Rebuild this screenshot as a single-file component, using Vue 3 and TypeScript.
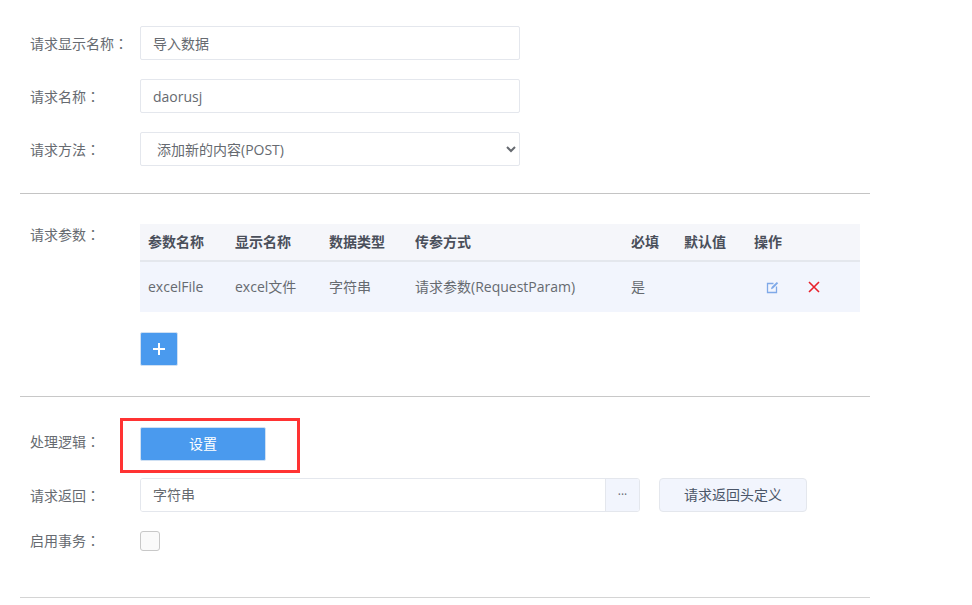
<script setup lang="ts">
const columns = ['参数名称', '显示名称', '数据类型', '传参方式', '必填', '默认值', '操作']
const widths = [87, 94, 86, 216, 53, 70, 114]
const cells = ['excelFile', 'excel文件', '字符串', '请求参数(RequestParam)', '是', '']
</script>

<template>
  <div class="page">
    <section class="section first">
      <div class="row">
        <label class="label">请求显示名称<span class="colon">：</span></label>
        <input class="field" value="导入数据" />
      </div>
      <div class="row">
        <label class="label">请求名称<span class="colon">：</span></label>
        <input class="field" value="daorusj" />
      </div>
      <div class="row">
        <label class="label">请求方法<span class="colon">：</span></label>
        <select class="field select">
          <option>添加新的内容(POST)</option>
        </select>
      </div>
    </section>

    <section class="section params">
      <div class="row top">
        <label class="label param-label">请求参数<span class="colon">：</span></label>
        <div class="param-body">
          <table class="table">
            <colgroup>
              <col v-for="w in widths" :key="w" :style="{ width: w + 'px' }" />
            </colgroup>
            <thead>
              <tr>
                <th v-for="c in columns" :key="c">{{ c }}</th>
              </tr>
            </thead>
            <tbody>
              <tr>
                <td v-for="(c, i) in cells" :key="i">{{ c }}</td>
                <td>
                  <div class="actions">
                    <svg class="icon" width="13" height="13" viewBox="0 0 13 13" fill="none">
                      <path d="M7.5 2.5H1.5V11.5H10.5V5.5" stroke="#7fa9e8" stroke-width="1.3" />
                      <path d="M5 8.2L5.6 6L10.8 0.9L12.2 2.3L7 7.5Z" fill="#7fa9e8" />
                    </svg>
                    <svg class="icon" width="12" height="12" viewBox="0 0 12 12" fill="none">
                      <path d="M1 1L11 11M11 1L1 11" stroke="#e8212b" stroke-width="1.6" />
                    </svg>
                  </div>
                </td>
              </tr>
            </tbody>
          </table>
          <button class="add" type="button">
            <svg width="14" height="14" viewBox="0 0 14 14" fill="none">
              <path d="M7 1V13M1 7H13" stroke="#fff" stroke-width="2" />
            </svg>
          </button>
        </div>
      </div>
    </section>

    <section class="section logic">
      <div class="row logic-row">
        <label class="label logic-label">处理逻辑<span class="colon">：</span></label>
        <div class="highlight-wrap">
          <button class="primary" type="button">设置</button>
          <span class="highlight"></span>
        </div>
      </div>
      <div class="row return-row">
        <label class="label">请求返回<span class="colon">：</span></label>
        <div class="group">
          <input class="group-input" value="字符串" />
          <button class="addon" type="button">···</button>
        </div>
        <button class="secondary" type="button">请求返回头定义</button>
      </div>
      <div class="row tx-row">
        <label class="label tx-label">启用事务<span class="colon">：</span></label>
        <span class="checkbox"></span>
      </div>
    </section>
  </div>
</template>

<style>
html,
body {
  margin: 0;
  background: #fff;
}
</style>

<style scoped>
.page {
  width: 850px;
  margin-left: 20px;
  font-family: "Open Sans", "Noto Sans CJK SC", sans-serif;
  font-size: 14px;
  line-height: 20px;
  color: #666a70;
}
.section {
  border-bottom: 1px solid #c8c8c8;
  box-sizing: border-box;
}
.first {
  padding-top: 26px;
  height: 194px;
  border-bottom-color: #c4c4c4;
}
.params {
  padding: 30px 0;
  height: 203px;
}
.logic {
  padding-top: 30px;
  height: 201px;
  border-bottom-color: #d4d4d4;
}
.row {
  display: flex;
  align-items: center;
  margin-bottom: 19px;
}
.row.top {
  align-items: flex-start;
  margin-bottom: 0;
}
.label {
  width: 120px;
  padding-left: 10px;
  box-sizing: border-box;
  flex: none;
  white-space: nowrap;
}
.colon {
  font-family: "Noto Sans CJK TC", sans-serif;
}
.field {
  width: 380px;
  height: 34px;
  box-sizing: border-box;
  border: 1px solid #e4e7ed;
  border-radius: 2px;
  background: #fff;
  padding: 0 12px;
  font: inherit;
  color: #666a70;
  outline: none;
}
.param-body {
  width: 720px;
}
.table {
  width: 720px;
  border-collapse: collapse;
  table-layout: fixed;
}
th {
  height: 36px;
  padding: 0 0 0 8px;
  background: #f5f6fa;
  border-bottom: 2px solid #e4e7ed;
  text-align: left;
  font-weight: 700;
  color: #4a4f5a;
}
td {
  height: 50px;
  padding: 0 0 0 8px;
  background: #f2f5fd;
}
.actions {
  display: flex;
  align-items: center;
  gap: 29px;
  padding-left: 12px;
}
.icon {
  display: block;
}
.add {
  display: flex;
  align-items: center;
  justify-content: center;
  width: 38px;
  height: 34px;
  margin-top: 20px;
  padding: 0;
  background: #4a9aee;
  border: 1px solid #cfe0f3;
  border-radius: 2px;
}
.logic-row {
  margin-bottom: 17px;
}
.logic-label {
  margin-top: -6px;
}
.highlight-wrap {
  position: relative;
  display: flex;
}
.primary {
  width: 126px;
  height: 34px;
  padding: 0;
  background: #4a9aee;
  border: 1px solid #cfe0f3;
  border-radius: 2px;
  color: #fff;
  font: inherit;
}
.highlight {
  position: absolute;
  left: -20px;
  top: -9px;
  width: 180px;
  height: 55px;
  box-sizing: border-box;
  border: 3px solid #ff3333;
}
.group {
  display: flex;
  width: 500px;
  height: 34px;
  box-sizing: border-box;
  border: 1px solid #e4e7ed;
  border-radius: 3px;
  overflow: hidden;
}
.group-input {
  flex: 1;
  min-width: 0;
  border: none;
  outline: none;
  padding: 0 12px;
  font: inherit;
  color: #666a70;
}
.addon {
  width: 34px;
  padding: 0;
  border: none;
  border-left: 1px solid #e4e7ed;
  background: #f2f5fd;
  color: #666a70;
  font: inherit;
  font-size: 12px;
}
.secondary {
  width: 148px;
  height: 34px;
  margin-left: 19px;
  padding: 0;
  border: 1px solid #e4e7ed;
  border-radius: 4px;
  background: #f2f5fd;
  color: #4a5568;
  font: inherit;
}
.tx-row {
  margin-bottom: 0;
}
.tx-label {
  margin-top: -2px;
}
.checkbox {
  width: 20px;
  height: 20px;
  box-sizing: border-box;
  border: 1px solid #c8c8c8;
  border-radius: 3px;
  background: #fafafa;
}
</style>
